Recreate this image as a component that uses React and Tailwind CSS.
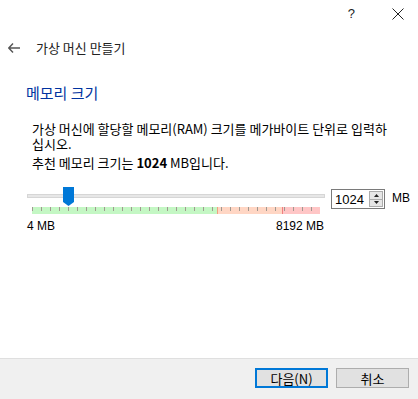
import React from "react";

export default function App() {
  const ticks = Array.from({ length: 32 }, (_, i) => i);
  return (
    <div
      className="w-[418px] h-[399px] bg-white flex flex-col text-black overflow-hidden font-['Noto_Sans_CJK_KR',sans-serif]"
    >
      {/* top bar */}
      <div className="h-[27px] flex items-center justify-end pr-[14px]">
        <span className="text-[13px] leading-none mr-[37px] font-['Liberation_Sans',sans-serif] text-[#222]">?</span>
        <svg width="12" height="12" viewBox="0 0 12 12" className="block">
          <path d="M0.5 0.5 L11.5 11.5 M11.5 0.5 L0.5 11.5" stroke="#222" strokeWidth="1" fill="none" />
        </svg>
      </div>

      {/* title row */}
      <div className="h-[42px] flex items-center pl-[8px]">
        <svg width="12" height="10" viewBox="0 0 12 10" className="block">
          <path d="M5 0.5 L0.8 5 L5 9.5 M0.8 5 L12 5" stroke="#555" strokeWidth="1.4" fill="none" />
        </svg>
        <span className="ml-[16px] text-[13px] leading-[16px] text-[#222]">가상 머신 만들기</span>
      </div>

      {/* heading */}
      <div className="mt-[14px] pl-[26px] h-[20px] text-[15px] leading-[20px] text-[#0033a0]">
        메모리 크기
      </div>

      {/* body */}
      <div className="mt-[18px] pl-[32px] text-[13px] leading-[15px] text-black">
        가상 머신에 할당할 메모리(RAM) 크기를 메가바이트 단위로 입력하
        <br />
        십시오.
      </div>
      <div className="mt-[4px] pl-[32px] text-[13px] leading-[15px] text-black">
        추천 메모리 크기는 <span className="font-bold">1024</span> MB입니다.
      </div>

      {/* slider row */}
      <div className="mt-[17px] pl-[27px] flex items-start">
        <div className="relative w-[298px] h-[27px]">
          <div className="mt-[7px] h-[4px] bg-[#e7e7e7] border border-[#d6d6d6]" />
          <div className="mt-[9px] ml-[5px] w-[288px] h-[7px] flex relative">
            <div className="w-[185px] h-full bg-[#c4f7c4]" />
            <div className="w-[65px] h-full bg-[#ffd6c4] border-l border-[#f0a080]" />
            <div className="flex-1 h-full bg-[#ffc6c6] border-l border-[#f08080]" />
            {ticks.map((i) => (
              <div
                key={i}
                className="absolute top-0 w-px h-[4px] bg-[#a09890]"
                style={{ left: i * 9 }}
              />
            ))}
          </div>
          <svg
            width="11"
            height="19"
            viewBox="0 0 11 19"
            className="absolute left-[36px] top-0 block"
          >
            <polygon points="0,0 11,0 11,15 5.5,19 0,15" fill="#0078d7" />
          </svg>
        </div>

        {/* spin box */}
        <div className="mt-[2px] ml-[6px] w-[54px] h-[20px] border border-[#7a7a7a] bg-white flex items-center">
          <span className="ml-[3px] text-[13px] leading-none flex-1 font-['Liberation_Sans_Narrow','Liberation_Sans',sans-serif]">1024</span>
          <div className="mr-[1px] w-[14px] h-[16px] flex flex-col border border-[#acacac] bg-[#e6e6e6]">
            <div className="flex-1 flex items-center justify-center border-b border-[#acacac]">
              <svg width="5" height="3" viewBox="0 0 5 3" className="block">
                <polygon points="2.5,0 5,3 0,3" fill="#222" />
              </svg>
            </div>
            <div className="flex-1 flex items-center justify-center">
              <svg width="5" height="3" viewBox="0 0 5 3" className="block">
                <polygon points="0,0 5,0 2.5,3" fill="#222" />
              </svg>
            </div>
          </div>
        </div>
        <span className="ml-[7px] mt-[4px] text-[12px] leading-[14px] font-['Liberation_Sans',sans-serif]">MB</span>
      </div>

      {/* labels */}
      <div className="mt-[5px] ml-[27px] w-[298px] pr-[1px] flex justify-between text-[12px] leading-[14px] font-['Liberation_Sans',sans-serif]">
        <span>4 MB</span>
        <span>8192 MB</span>
      </div>

      {/* bottom bar */}
      <div className="mt-auto h-[41px] border-t border-[#dfdfdf] bg-[#f0f0f0] flex justify-end items-start pt-[9px] pr-[9px] gap-[8px]">
        <button className="w-[73px] h-[20px] border-2 border-[#0078d7] bg-[#e1e1e1] text-[13px] leading-none flex items-center justify-center">
          다음(N)
        </button>
        <button className="w-[73px] h-[20px] border border-[#adadad] bg-[#e1e1e1] text-[13px] leading-none flex items-center justify-center">
          취소
        </button>
      </div>
    </div>
  );
}
